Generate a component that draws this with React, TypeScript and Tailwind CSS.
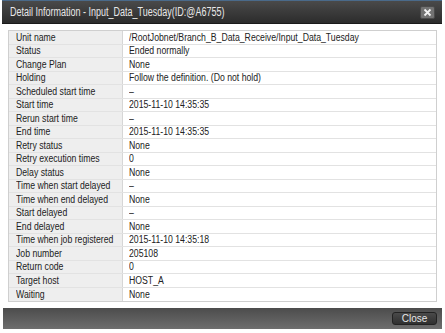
const rows: [string, string][] = [
  ["Unit name", "/RootJobnet/Branch_B_Data_Receive/Input_Data_Tuesday"],
  ["Status", "Ended normally"],
  ["Change Plan", "None"],
  ["Holding", "Follow the definition. (Do not hold)"],
  ["Scheduled start time", "\u2013"],
  ["Start time", "2015-11-10 14:35:35"],
  ["Rerun start time", "\u2013"],
  ["End time", "2015-11-10 14:35:35"],
  ["Retry status", "None"],
  ["Retry execution times", "0"],
  ["Delay status", "None"],
  ["Time when start delayed", "\u2013"],
  ["Time when end delayed", "None"],
  ["Start delayed", "\u2013"],
  ["End delayed", "None"],
  ["Time when job registered", "2015-11-10 14:35:18"],
  ["Job number", "205108"],
  ["Return code", "0"],
  ["Target host", "HOST_A"],
  ["Waiting", "None"],
];

export default function App() {
  return (
    <div className="w-[445px] h-[333px] bg-white overflow-hidden font-['Liberation_Sans',Arial,sans-serif]">
      <div className="ml-[2px] w-[440px] flex flex-col">
        {/* Title bar */}
        <div className="h-[24px] flex items-center justify-between pl-[8px] pr-[7px] bg-gradient-to-b from-[#4a4a4a] to-[#2c2c2c] border-t border-t-[#4a6a8a] border-b border-b-[#1a1a1a]">
          <span className="inline-block origin-left scale-x-[0.75] text-[12px] text-[#e8e8e8] whitespace-nowrap">
            Detail Information - Input_Data_Tuesday(ID:@A6755)
          </span>
          <button className="w-[15px] h-[13px] flex items-center justify-center rounded-[2px] bg-[#727272] border border-[#4a4a4a]">
            <svg width="9" height="9" viewBox="0 0 9 9">
              <path d="M1.5 1.5 L7.5 7.5 M7.5 1.5 L1.5 7.5" stroke="#f2f2f2" strokeWidth="1.8" />
            </svg>
          </button>
        </div>

        {/* Body */}
        <div className="pt-[6px] pl-[6px] pr-[5px] pb-[6px]">
          <div className="border border-[#cfcfcf] text-[10px] text-[#222]">
            {rows.map(([label, value], i) => (
              <div
                key={label}
                className={`flex h-[13.5px] items-center ${i < rows.length - 1 ? "border-b border-[#e2e2e2]" : ""}`}
              >
                <div className="w-[114px] h-full flex items-center pl-[7px] bg-[#eeeeee] border-r border-[#d6d6d6] whitespace-nowrap">
                  <span className="inline-block origin-left scale-x-[0.87]">{label}</span>
                </div>
                <div className="flex-1 h-full flex items-center pl-[6px] whitespace-nowrap">
                  <span className="inline-block origin-left scale-x-[0.87]">{value}</span>
                </div>
              </div>
            ))}
          </div>
        </div>

        {/* Footer */}
        <div className="ml-[1px] h-[21px] flex items-center justify-end pr-[5px] bg-gradient-to-b from-[#4c4c4c] to-[#6e6e6e]">
          <button className="w-[45px] h-[13px] flex items-center justify-center rounded-[3px] bg-gradient-to-b from-[#4a4a4a] to-[#303030] border border-[#222] text-[10px] text-[#e6e6e6]">
            Close
          </button>
        </div>
      </div>
    </div>
  );
}
